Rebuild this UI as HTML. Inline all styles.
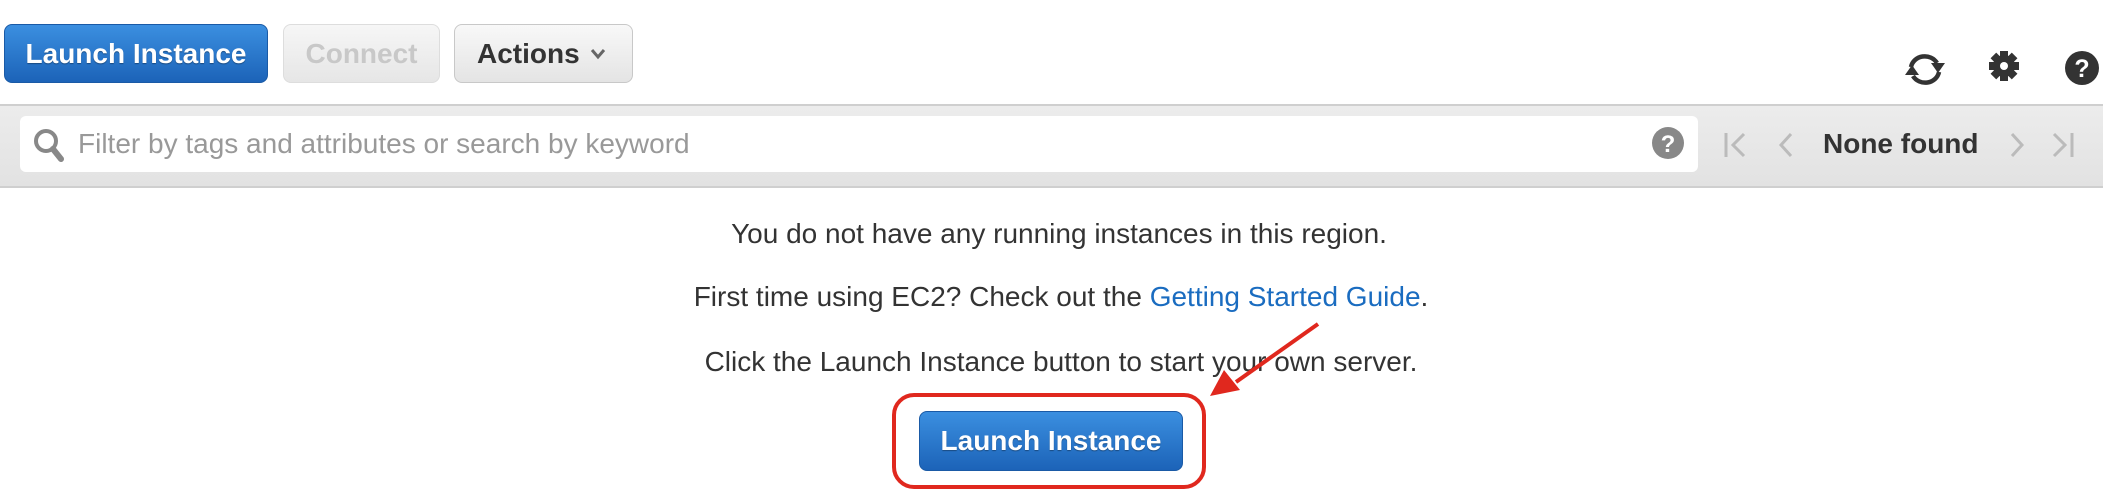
<!DOCTYPE html>
<html><head><meta charset="utf-8"><style>
body{margin:0;width:2120px;height:498px;background:#fff;position:relative;overflow:hidden;font-family:"Liberation Sans",Arial,sans-serif}
.a{position:absolute}
.btn{position:absolute;border-radius:8px;box-sizing:border-box;display:flex;align-items:center;justify-content:center;font-weight:bold;white-space:nowrap}
.blue{background:linear-gradient(#3b8fe0,#1c63b8);border:1px solid #1a5aa6;color:#fff;font-size:28px;text-shadow:0 1px 1px rgba(0,0,0,.35)}
.line{position:absolute;left:0;width:2120px;text-align:center;color:#333;font-size:28px;white-space:nowrap;line-height:32px}
</style></head><body>
<div class="btn blue" style="left:4px;top:24px;width:264px;height:59px">Launch Instance</div>
<div class="btn" style="left:283px;top:24px;width:157px;height:59px;background:linear-gradient(#f6f6f6,#e6e6e6);border:1px solid #ddd;color:#c8c8c8;font-size:28px">Connect</div>
<div class="btn" style="left:454px;top:24px;width:179px;height:59px;background:linear-gradient(#f8f8f8,#e4e4e4);border:1px solid #c8c8c8;color:#333;font-size:28px;justify-content:flex-start;padding-left:22px">Actions
<svg class="a" style="left:135px;top:23px" width="16" height="12" viewBox="0 0 16 12"><path d="M2 2 L8 9 L14 2" fill="none" stroke="#666" stroke-width="3"/></svg></div>

<svg class="a" style="left:1903px;top:50px" width="44" height="38" viewBox="0 0 44 38"><path d="M8 17 A14 13 0 0 1 34 13" fill="none" stroke="#333" stroke-width="4.5"/><path d="M28 13 L42 13 L35 23 Z" fill="#333"/><path d="M36 22 A14 13 0 0 1 10 26" fill="none" stroke="#333" stroke-width="4.5"/><path d="M2 25 L16 25 L9 15 Z" fill="#333"/></svg>
<svg class="a" style="left:1988px;top:50px" width="32" height="32" viewBox="0 0 32 32"><g fill="#333"><circle cx="16" cy="16" r="11"/><rect x="12" y="1" width="8" height="30"/><rect x="1" y="12" width="30" height="8"/><rect x="12" y="1" width="8" height="30" transform="rotate(45 16 16)"/><rect x="12" y="1" width="8" height="30" transform="rotate(-45 16 16)"/></g><circle cx="16" cy="16" r="4" fill="#fff"/></svg>
<svg class="a" style="left:2064px;top:50px" width="36" height="36" viewBox="0 0 36 36"><circle cx="18" cy="18" r="17" fill="#333"/><text x="18" y="27" text-anchor="middle" fill="#fff" font-family="Liberation Sans" font-weight="bold" font-size="25">?</text></svg>

<div class="a" style="left:0;top:104px;width:2103px;height:84px;background:linear-gradient(#ececec,#e2e2e2);border-top:2px solid #cfcfcf;border-bottom:2px solid #cfcfcf;box-sizing:border-box"></div>
<div class="a" style="left:20px;top:116px;width:1678px;height:56px;background:#fff;border-radius:6px"></div>
<svg class="a" style="left:33px;top:128px" width="32" height="34" viewBox="0 0 32 34"><circle cx="13" cy="13" r="10" fill="none" stroke="#888" stroke-width="4"/><path d="M20 21 L28 31" stroke="#888" stroke-width="6" stroke-linecap="round"/></svg>
<div class="a" style="left:78px;top:128px;font-size:28px;color:#999;white-space:nowrap">Filter by tags and attributes or search by keyword</div>
<svg class="a" style="left:1651px;top:126px" width="34" height="34" viewBox="0 0 34 34"><circle cx="17" cy="17" r="16" fill="#888"/><text x="17" y="26" text-anchor="middle" fill="#fff" font-family="Liberation Sans" font-weight="bold" font-size="24">?</text></svg>
<svg class="a" style="left:1724px;top:131px" width="24" height="28" viewBox="0 0 24 28"><path d="M2 2V26M20 3L9 14L20 25" fill="none" stroke="#bbb" stroke-width="3"/></svg>
<svg class="a" style="left:1777px;top:131px" width="18" height="28" viewBox="0 0 18 28"><path d="M14 3L4 14L14 25" fill="none" stroke="#bbb" stroke-width="3"/></svg>
<div class="a" style="left:1823px;top:128px;font-size:28px;font-weight:bold;color:#333;white-space:nowrap">None found</div>
<svg class="a" style="left:2008px;top:131px" width="18" height="28" viewBox="0 0 18 28"><path d="M4 3L14 14L4 25" fill="none" stroke="#bbb" stroke-width="3"/></svg>
<svg class="a" style="left:2050px;top:131px" width="24" height="28" viewBox="0 0 24 28"><path d="M4 3L15 14L4 25M22 2V26" fill="none" stroke="#bbb" stroke-width="3"/></svg>

<div class="line" style="top:218px;left:-1px">You do not have any running instances in this region.</div>
<div class="line" style="top:281px;left:1px">First time using EC2? Check out the <span style="color:#1a6cc0">Getting Started Guide</span>.</div>
<div class="line" style="top:346px;left:1px">Click the Launch Instance button to start your own server.</div>

<div class="a" style="left:892px;top:393px;width:314px;height:96px;border:4px solid #e0281e;border-radius:22px;box-sizing:border-box"></div>
<div class="btn blue" style="left:919px;top:411px;width:264px;height:60px">Launch Instance</div>
<svg class="a" style="left:1200px;top:318px" width="130" height="90" viewBox="0 0 130 90"><path d="M118 6 L36 64" stroke="#e0281e" stroke-width="4"/><path d="M10 78 L24 52 L40 72 Z" fill="#e0281e"/></svg>
</body></html>
